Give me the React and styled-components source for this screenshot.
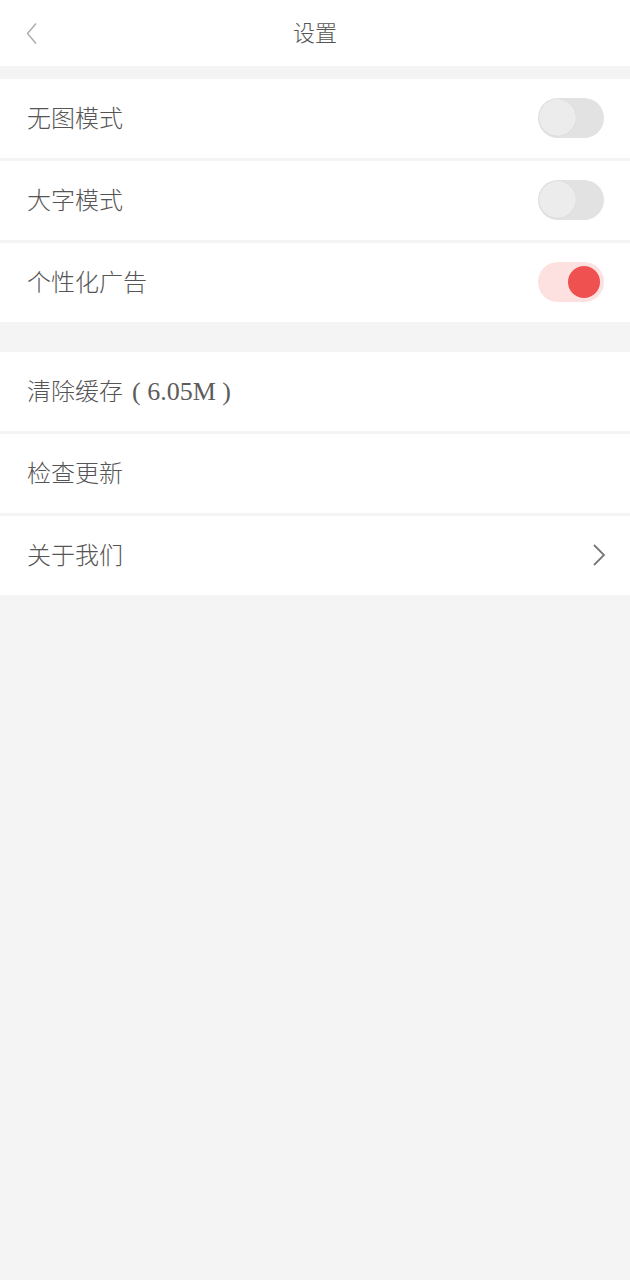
import React from "react";
import styled, { createGlobalStyle } from "styled-components";

const Global = createGlobalStyle`
  html, body { margin: 0; padding: 0; background: #f4f4f4; }
  body { font-family: "Liberation Serif", "Noto Sans CJK SC", serif; }
`;

const Page = styled.div`
  width: 630px;
  min-height: 1280px;
  background: #f4f4f4;
`;

const Header = styled.header`
  height: 66px;
  background: #fff;
  display: flex;
  align-items: center;
  justify-content: center;
  position: relative;
`;

const BackButton = styled.span`
  position: absolute;
  left: 26px;
  top: 22px;
  width: 12px;
  height: 24px;
  display: flex;
`;

const Title = styled.h1`
  margin: 0 0 4px;
  font-size: 22px;
  font-weight: 300;
  color: #555;
`;

const Group = styled.section`
  margin-top: ${(p) => p.$gap}px;
  display: flex;
  flex-direction: column;
  gap: 3px;
`;

const Row = styled.div`
  height: 79px;
  background: #fff;
  display: flex;
  align-items: center;
  justify-content: space-between;
  padding: 0 26px 0 27px;
  box-sizing: border-box;
`;

const Label = styled.span`
  font-size: 24px;
  font-weight: 300;
  color: #555;
  margin-bottom: 4px;
`;

const Latin = styled.span`
  font-size: 26px;
  font-weight: 400;
  color: #5c5c5c;
  margin-left: 9px;
`;

const Track = styled.span`
  width: 66px;
  height: 40px;
  border-radius: 20px;
  background: ${(p) => (p.$on ? "#fde1e1" : "#e2e2e2")};
  display: flex;
  align-items: center;
  justify-content: ${(p) => (p.$on ? "flex-end" : "flex-start")};
  padding: ${(p) => (p.$on ? "0 4px" : "0 1px")};
  box-sizing: border-box;
  margin-bottom: 2px;
`;

const Knob = styled.span`
  width: ${(p) => (p.$on ? 32 : 37)}px;
  height: ${(p) => (p.$on ? 32 : 37)}px;
  border-radius: 50%;
  background: ${(p) => (p.$on ? "#ef5050" : "#ececec")};
  box-shadow: ${(p) => (p.$on ? "none" : "0 0 1px rgba(0,0,0,0.12)")};
`;

const Toggle = ({ on }) => (
  <Track $on={on}>
    <Knob $on={on} />
  </Track>
);

const Chevron = () => (
  <svg width="14" height="24" viewBox="0 0 14 24" style={{ marginRight: -2, marginBottom: 2 }}>
    <path d="M2 2 L12 12 L2 22" fill="none" stroke="#777" strokeWidth="1.8" />
  </svg>
);

export default function App() {
  return (
    <Page>
      <Global />
      <Header>
        <BackButton>
          <svg width="12" height="24" viewBox="0 0 12 24">
            <path d="M10 1.5 L1.5 11.5 L10 21.5" fill="none" stroke="#aaa" strokeWidth="1.4" />
          </svg>
        </BackButton>
        <Title>设置</Title>
      </Header>
      <Group $gap={13}>
        <Row>
          <Label>无图模式</Label>
          <Toggle on={false} />
        </Row>
        <Row>
          <Label>大字模式</Label>
          <Toggle on={false} />
        </Row>
        <Row>
          <Label>个性化广告</Label>
          <Toggle on={true} />
        </Row>
      </Group>
      <Group $gap={30}>
        <Row>
          <Label>
            清除缓存<Latin>( 6.05M )</Latin>
          </Label>
        </Row>
        <Row>
          <Label>检查更新</Label>
        </Row>
        <Row>
          <Label>关于我们</Label>
          <Chevron />
        </Row>
      </Group>
    </Page>
  );
}
